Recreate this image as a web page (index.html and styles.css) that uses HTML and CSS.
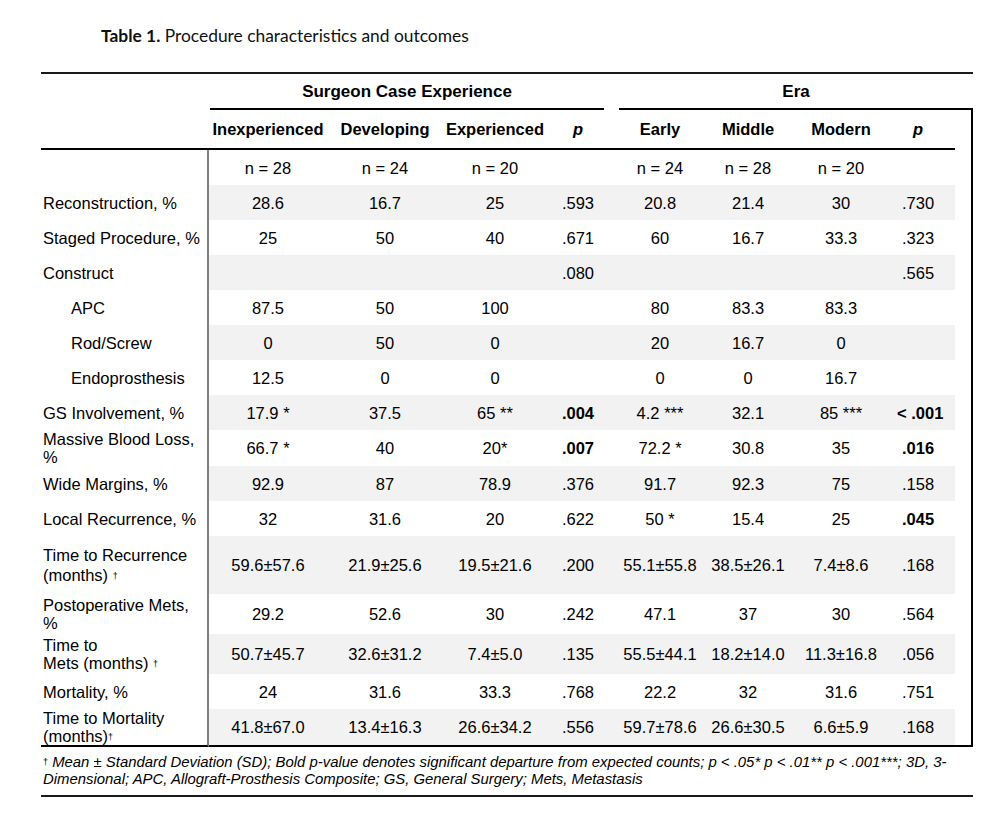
FILE: index.html
```html
<!DOCTYPE html>
<html>
<head>
<meta charset="utf-8">
<link rel="stylesheet" href="styles.css">
</head>
<body>
<div class="page">
  <p class="title"><b>Table 1.</b> Procedure characteristics and outcomes</p>
  <table class="tbl">
    <colgroup>
      <col class="c-label"><col class="c-inexp"><col class="c-dev"><col class="c-exp"><col class="c-p1">
      <col class="c-early"><col class="c-mid"><col class="c-mod"><col class="c-p2"><col class="c-edge">
    </colgroup>
    <thead>
      <tr class="group-row">
        <th class="blank"></th>
        <th colspan="4" class="grp"><div class="grp-label grp-left">Surgeon Case Experience</div></th>
        <th colspan="5" class="grp"><div class="grp-label grp-right">Era</div></th>
      </tr>
      <tr class="sub-row">
        <th class="blank rule"></th>
        <th class="rule">Inexperienced</th>
        <th class="rule">Developing</th>
        <th class="rule">Experienced</th>
        <th class="rule"><i>p</i></th>
        <th class="rule">Early</th>
        <th class="rule">Middle</th>
        <th class="rule">Modern</th>
        <th class="rule pcol"><i>p</i></th>
        <th class="edge"></th>
      </tr>
    </thead>
    <tbody>
      <tr class="plain">
        <td class="label"></td><td>n = 28</td><td>n = 24</td><td>n = 20</td><td></td><td>n = 24</td><td>n = 28</td><td>n = 20</td><td class="pcol"></td><td class="edge"></td>
      </tr>
      <tr class="stripe">
        <td class="label">Reconstruction, %</td><td>28.6</td><td>16.7</td><td>25</td><td>.593</td><td>20.8</td><td>21.4</td><td>30</td><td class="pcol">.730</td><td class="edge"></td>
      </tr>
      <tr class="plain">
        <td class="label">Staged Procedure, %</td><td>25</td><td>50</td><td>40</td><td>.671</td><td>60</td><td>16.7</td><td>33.3</td><td class="pcol">.323</td><td class="edge"></td>
      </tr>
      <tr class="stripe">
        <td class="label">Construct</td><td></td><td></td><td></td><td>.080</td><td></td><td></td><td></td><td class="pcol">.565</td><td class="edge"></td>
      </tr>
      <tr class="plain">
        <td class="label indent">APC</td><td>87.5</td><td>50</td><td>100</td><td></td><td>80</td><td>83.3</td><td>83.3</td><td class="pcol"></td><td class="edge"></td>
      </tr>
      <tr class="stripe">
        <td class="label indent">Rod/Screw</td><td>0</td><td>50</td><td>0</td><td></td><td>20</td><td>16.7</td><td>0</td><td class="pcol"></td><td class="edge"></td>
      </tr>
      <tr class="plain">
        <td class="label indent">Endoprosthesis</td><td>12.5</td><td>0</td><td>0</td><td></td><td>0</td><td>0</td><td>16.7</td><td class="pcol"></td><td class="edge"></td>
      </tr>
      <tr class="stripe">
        <td class="label">GS Involvement, %</td><td>17.9 *</td><td>37.5</td><td>65 **</td><td><b>.004</b></td><td>4.2 ***</td><td>32.1</td><td>85 ***</td><td class="pcol"><b>&lt; .001</b></td><td class="edge"></td>
      </tr>
      <tr class="plain">
        <td class="label">Massive Blood Loss, %</td><td>66.7 *</td><td>40</td><td>20*</td><td><b>.007</b></td><td>72.2 *</td><td>30.8</td><td>35</td><td class="pcol"><b>.016</b></td><td class="edge"></td>
      </tr>
      <tr class="stripe">
        <td class="label">Wide Margins, %</td><td>92.9</td><td>87</td><td>78.9</td><td>.376</td><td>91.7</td><td>92.3</td><td>75</td><td class="pcol">.158</td><td class="edge"></td>
      </tr>
      <tr class="plain">
        <td class="label">Local Recurrence, %</td><td>32</td><td>31.6</td><td>20</td><td>.622</td><td>50 *</td><td>15.4</td><td>25</td><td class="pcol"><b>.045</b></td><td class="edge"></td>
      </tr>
      <tr class="stripe tall">
        <td class="label">Time to Recurrence (months) <span class="dag">†</span></td><td>59.6±57.6</td><td>21.9±25.6</td><td>19.5±21.6</td><td>.200</td><td>55.1±55.8</td><td>38.5±26.1</td><td>7.4±8.6</td><td class="pcol">.168</td><td class="edge"></td>
      </tr>
      <tr class="plain mid">
        <td class="label">Postoperative Mets, %</td><td>29.2</td><td>52.6</td><td>30</td><td>.242</td><td>47.1</td><td>37</td><td>30</td><td class="pcol">.564</td><td class="edge"></td>
      </tr>
      <tr class="stripe mid">
        <td class="label">Time to<br>Mets (months) <span class="dag">†</span></td><td>50.7±45.7</td><td>32.6±31.2</td><td>7.4±5.0</td><td>.135</td><td>55.5±44.1</td><td>18.2±14.0</td><td>11.3±16.8</td><td class="pcol">.056</td><td class="edge"></td>
      </tr>
      <tr class="plain">
        <td class="label">Mortality, %</td><td>24</td><td>31.6</td><td>33.3</td><td>.768</td><td>22.2</td><td>32</td><td>31.6</td><td class="pcol">.751</td><td class="edge"></td>
      </tr>
      <tr class="stripe last">
        <td class="label">Time to Mortality (months)<span class="dag">†</span></td><td>41.8±67.0</td><td>13.4±16.3</td><td>26.6±34.2</td><td>.556</td><td>59.7±78.6</td><td>26.6±30.5</td><td>6.6±5.9</td><td class="pcol">.168</td><td class="edge"></td>
      </tr>
    </tbody>
  </table>
  <div class="foot">
    <span class="foot-line"><span class="dag">†</span> Mean ± Standard Deviation (SD); Bold p-value denotes significant departure from expected counts; p &lt; .05* p &lt; .01** p &lt; .001***; 3D, 3-</span>
    <span class="foot-line">Dimensional; APC, Allograft-Prosthesis Composite; GS, General Surgery; Mets, Metastasis</span>
  </div>
</div>
</body>
</html>
```

FILE: styles.css
```css
html, body {
  margin: 0;
  padding: 0;
  background: #ffffff;
}

.page {
  padding-left: 41px;
  padding-top: 26px;
  width: 932px;
  color: #000;
}

.title {
  margin: 0 0 26px 60px;
  font-family: Lato, "Open Sans", sans-serif;
  font-size: 17.4px;
  line-height: 20px;
  color: #111;
}

.tbl {
  width: 932px;
  table-layout: fixed;
  border-collapse: separate;
  border-spacing: 0;
  font-family: "Liberation Sans", Arial, sans-serif;
  font-size: 16.5px;
}

.c-label { width: 168px; }
.c-inexp { width: 118px; }
.c-dev { width: 116px; }
.c-exp { width: 104px; }
.c-p1 { width: 62px; }
.c-early { width: 102px; }
.c-mid { width: 74px; }
.c-mod { width: 112px; }
.c-p2 { width: 58px; }
.c-edge { width: 18px; }

.tbl th, .tbl td {
  padding: 0;
  text-align: center;
  vertical-align: middle;
  box-sizing: border-box;
  white-space: nowrap;
}

/* group header row */
.group-row th {
  border-top: 2px solid #1a1a1a;
  height: 38px;
  vertical-align: bottom;
  font-weight: bold;
  font-size: 17px;
}

.grp-label {
  height: 36px;
  padding-top: 2px;
  line-height: 32px;
  border-bottom: 2px solid #000;
  box-sizing: border-box;
}

.grp-left {
  margin-left: 1px;
  margin-right: 5px;
}

.grp-right {
  margin-left: 10px;
}

/* sub header row */
.sub-row th {
  height: 40px;
  font-weight: bold;
}

.sub-row th.rule {
  border-bottom: 2px solid #000;
}

.tbl th.edge, .tbl td.edge {
  border-right: 2px solid #000;
}

.tbl .pcol {
  padding-right: 16px;
}

/* body */
.tbl td {
  height: 35px;
  line-height: 18px;
}

.tbl tr.stripe td {
  background: #f2f2f2;
}

.tbl tr td.label,
.tbl tr td.edge {
  background: #ffffff;
}

.tbl td.label {
  text-align: left;
  padding-left: 2px;
  border-right: 2px solid #7f7f7f;
  white-space: normal;
}

.tbl td.indent {
  padding-left: 30px;
}

.tbl tr.tall td {
  height: 58px;
  line-height: 20px;
}

.tbl tr.mid td {
  height: 40px;
}

.tbl tr.last td {
  height: 38px;
  border-bottom: 2px solid #000;
}

.dag {
  font-size: 9px;
  font-style: normal;
  line-height: 0;
  vertical-align: 2px;
}

.foot {
  padding-top: 7px;
  padding-bottom: 7px;
  border-bottom: 2px solid #1a1a1a;
  font-family: "Liberation Sans", Arial, sans-serif;
  font-style: italic;
  font-size: 14.9px;
  line-height: 17px;
  padding-left: 2px;
}

.foot-line {
  display: block;
  white-space: nowrap;
}
```
